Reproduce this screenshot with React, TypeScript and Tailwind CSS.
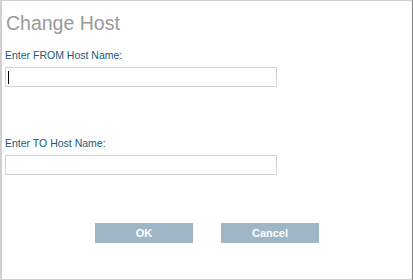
export default function App() {
  return (
    <div
      className="w-[413px] h-[280px] bg-white border-t border-b border-l-2 border-[#d0d0d0] border-r border-r-[#808080] flex flex-col"
      style={{ fontFamily: '"Liberation Sans", Arial, sans-serif' }}
    >
      <div className="pl-[4px] pt-[11px] text-[19.5px] leading-[22px] text-[#999999]">Change Host</div>
      <div className="pl-[3px] mt-[15px] text-[10.5px] leading-[13px] text-[#1c5a77]">Enter FROM Host Name:</div>
      <div className="ml-[3px] mt-[5px] w-[272px] h-[20px] border border-[#d4d4d4] flex items-center pl-[2px]">
        <div className="w-[1px] h-[13px] bg-black" />
      </div>
      <div className="pl-[3px] mt-[50px] text-[10.5px] leading-[13px] text-[#1c5a77]">Enter TO Host Name:</div>
      <div className="ml-[3px] mt-[5px] w-[272px] h-[20px] border border-[#d4d4d4]" />
      <div className="flex mt-[48px] ml-[93px] gap-[28px]">
        <div className="w-[98px] h-[20px] bg-[#9eb6c5] text-white text-[11px] font-bold flex items-center justify-center">OK</div>
        <div className="w-[98px] h-[20px] bg-[#9eb6c5] text-white text-[11px] font-bold flex items-center justify-center">Cancel</div>
      </div>
    </div>
  );
}
